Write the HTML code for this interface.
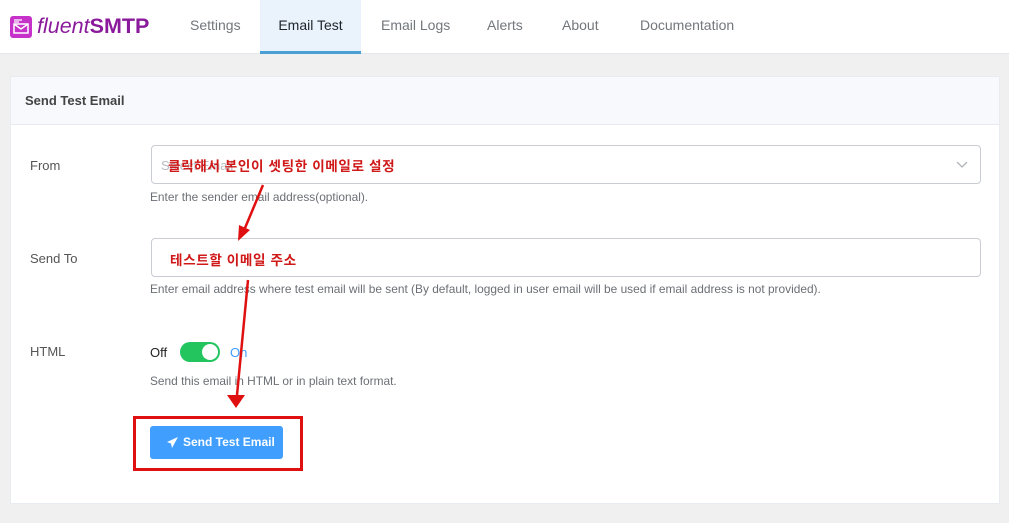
<!DOCTYPE html>
<html><head><meta charset="utf-8"><style>
*{box-sizing:border-box;margin:0;padding:0}
body{width:1009px;height:523px;background:#f0f0f1;font-family:"Liberation Sans","Noto Sans CJK KR",sans-serif;position:relative;overflow:hidden;color:#1d2327}
.nav{position:absolute;left:0;top:0;width:1009px;height:54px;background:#fff;border-bottom:1px solid #e3e6ea}
.tab{position:absolute;top:0;height:54px;line-height:50px;font-size:14px;color:#72777c}
.card{position:absolute;left:10px;top:76px;width:990px;height:428px;background:#fff;border:1px solid #e8ecf0}
.hd{height:48px;background:#f7f9fc;border-bottom:1px solid #e8ecf0;font-size:13px;font-weight:bold;color:#444;padding-left:14px;line-height:48px}
.lbl{position:absolute;left:30px;font-size:13px;color:#555}
.inp{position:absolute;left:151px;width:830px;height:39px;border:1px solid #c9ccd2;border-radius:4px;background:#fff}
.help{position:absolute;left:150px;font-size:11.9px;color:#6b6f75}
.kr{position:absolute;color:#d01818;font-weight:bold;font-size:13.6px;letter-spacing:.6px}
</style></head><body>
<div class="nav">
<svg style="position:absolute;left:10px;top:16px" width="22" height="22" viewBox="0 0 22 22"><rect width="22" height="22" rx="3" fill="#c531c9"/><path d="M4 8h14v9H4z" fill="none" stroke="#fff" stroke-width="1.5"/><path d="M4 8l7 5 7-5" fill="none" stroke="#fff" stroke-width="1.5"/><path d="M4 4h8M4 6h5" stroke="#fff" stroke-width="1.2"/></svg>
<div style="position:absolute;left:37px;top:14px;font-size:21.5px;color:#8a1a9b"><i>fluent</i><b>SMTP</b></div>
<div class="tab" style="left:190px">Settings</div>
<div class="tab" style="left:260px;width:101px;background:#eaf3fc;border-bottom:3px solid #4b9fd5;text-align:center;color:#1d2327">Email Test</div>
<div class="tab" style="left:381px">Email Logs</div>
<div class="tab" style="left:487px">Alerts</div>
<div class="tab" style="left:562px">About</div>
<div class="tab" style="left:640px">Documentation</div>
</div>
<div class="card"><div class="hd">Send Test Email</div></div>
<div class="lbl" style="top:158px">From</div>
<div class="inp" style="top:145px"><span style="position:absolute;left:9px;top:12px;font-size:13px;color:#b8bcc2">Select Email</span><svg style="position:absolute;right:12px;top:15px" width="12" height="8"><path d="M1 1l5 5 5-5" fill="none" stroke="#b0b4ba" stroke-width="1.3"/></svg></div>
<div class="kr" style="left:168px;top:155px">클릭해서 본인이 셋팅한 이메일로 설정</div>
<div class="help" style="top:190px">Enter the sender email address(optional).</div>
<div class="lbl" style="top:251px">Send To</div>
<div class="inp" style="top:238px"></div>
<div class="kr" style="left:170px;top:249px">테스트할 이메일 주소</div>
<div class="help" style="top:282px">Enter email address where test email will be sent (By default, logged in user email will be used if email address is not provided).</div>
<div class="lbl" style="top:344px">HTML</div>
<div style="position:absolute;left:150px;top:345px;font-size:13px;color:#222">Off</div>
<div style="position:absolute;left:180px;top:342px;width:40px;height:20px;border-radius:10px;background:#22c55e"><div style="position:absolute;right:2px;top:2px;width:16px;height:16px;border-radius:50%;background:#fff"></div></div>
<div style="position:absolute;left:230px;top:345px;font-size:13px;color:#409eff">On</div>
<div class="help" style="top:374px">Send this email in HTML or in plain text format.</div>
<div style="position:absolute;left:150px;top:426px;width:133px;height:33px;background:#409eff;border-radius:3px;color:#fff;font-size:12px;font-weight:bold;line-height:33px;padding-left:33px">Send Test Email<svg style="position:absolute;left:17px;top:11px" width="11" height="11" viewBox="0 0 11 11"><path d="M11 0L0 5l4 1.5L5 11z" fill="#fff"/></svg></div>
<div style="position:absolute;left:133px;top:416px;width:170px;height:55px;border:3px solid #e01010"></div>
<svg style="position:absolute;left:0;top:0" width="1009" height="523"><g stroke="#e01010" stroke-width="2.5" fill="#e01010"><line x1="263" y1="185" x2="245" y2="228"/><path d="M238 241l1-16 11 5z" stroke="none"/><line x1="248" y1="280" x2="237" y2="395"/><path d="M236 408l-9-13h18z" stroke="none"/></g></svg>
</body></html>
